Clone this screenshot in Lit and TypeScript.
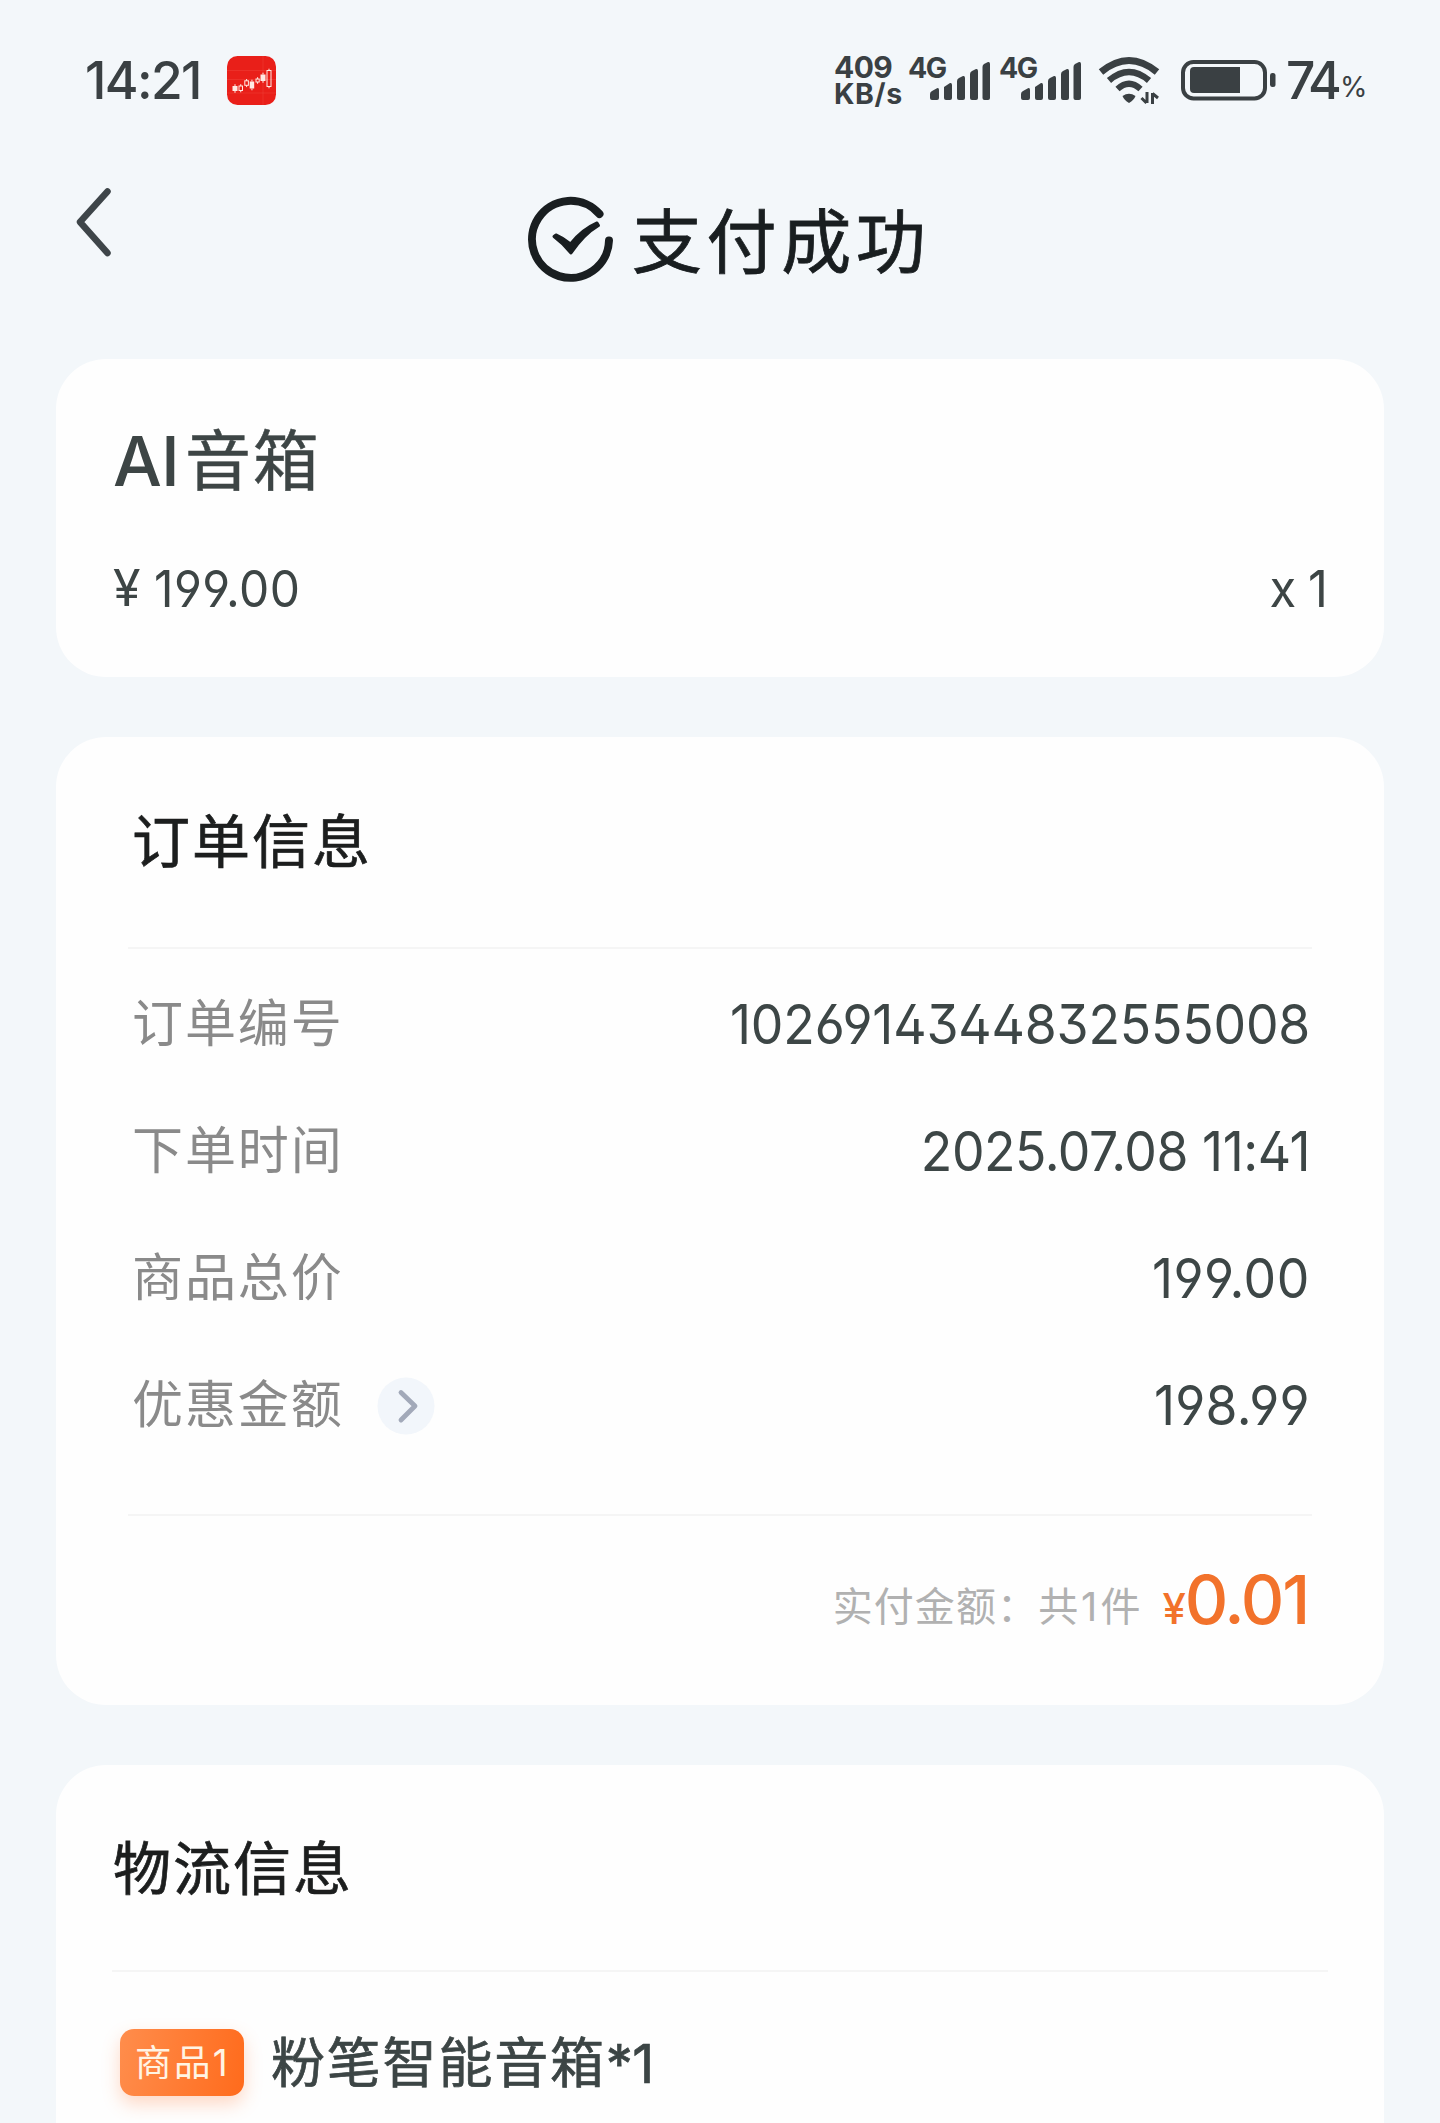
import { LitElement, html, svg, css } from "lit";
import { customElement, property } from "lit/decorators.js";

@customElement("signal-bars")
class SignalBars extends LitElement {
  static styles = css`
    :host { display: flex; width: 83px; height: 60px; position: relative; }
    .net { position: absolute; left: 0; top: -2px; font: 700 28.5px/40px Inter, sans-serif; letter-spacing: -1.4px; color: #3a4043; }
    svg { margin-left: 22px; }
  `;
  render() {
    return html`<span class="net">4G</span>
      <svg width="61" height="60" viewBox="0 0 61 60" fill="#3a4043">
        <path d="M0 44 Q0 42 2 41 L7 38.200 Q9 37.500 9 40 V48 Q9 50 7 50 H2 Q0 50 0 48Z" />
        <path d="M14 37 L20 33 Q22 32.500 22 35 V48 Q22 50 20 50 H16 Q14 50 14 48Z" />
        <path d="M27 31 Q27 29 29 28 L33 26 Q35 25.500 35 28 V48 Q35 50 33 50 H29 Q27 50 27 48Z" />
        <path d="M40 24 Q40 22 42 21 L46 19 Q48 18.500 48 21 V48 Q48 50 46 50 H42 Q40 50 40 48Z" />
        <path d="M52.500 17 Q52.500 15 54 14 L58 12 Q60 11.500 60 14 V48 Q60 50 58 50 H54.500 Q52.500 50 52.500 48Z" />
      </svg>`;
  }
}

@customElement("status-bar")
class StatusBar extends LitElement {
  static styles = css`
    :host { display: flex; height: 60px; padding: 50px 73px 0 85px; color: #3a4043; font-family: Inter, sans-serif; align-items: center; }
    .time { font: 500 51.5px/60px Inter, sans-serif; letter-spacing: -1.6px; width: 142px; white-space: nowrap; }
    .app { display: block; width: 49px; height: 49px; }
    .space { flex: 1; }
    .speed { width: 74px; font: 700 30px/27px Inter, sans-serif; letter-spacing: -0.6px; display: flex; flex-direction: column; }
    .unit { font-size: 28.5px; line-height: 26px; letter-spacing: 0.6px; }
    .bars { display: flex; gap: 8px; }
    .wifi { margin-left: 16px; }
    .battery { margin-left: 19px; }
    .level { margin-left: 10px; font: 500 51.5px/60px Inter, sans-serif; letter-spacing: -4.5px; width: 54px; white-space: nowrap; }
    .pct { font: 400 28px/30px Inter, sans-serif; width: 27px; padding-top: 14px; }
  `;
  render() {
    const candles = [
      [5.5, 30, 5, 5, 1], [12, 30, 3.500, 4.5, 0], [17.800, 24.800, 3.600, 4.500, 0], [22.700, 25.500, 4.500, 7, 1],
      [29, 23, 3.200, 3, 0], [33.500, 18.500, 5, 6.500, 1], [40, 14.500, 4, 16, 0],
    ];
    return html`
      <span class="time">14:21</span>
      <svg class="app" viewBox="0 0 49 49">
        <rect width="49" height="49" rx="10.500" fill="#e91f19" />
        <path d="M0 14.500H49M0 23.500H49M0 37H49M36 0V49" stroke="#f24a42" stroke-width=".6" opacity=".7" />
        ${candles.map(([x, y, w, h, f]) => svg`
          <path d="M${x + w / 2} ${y - 1.8}V${y}M${x + w / 2} ${y + h}V${y + h + 1.8}" stroke="#ffeae4" stroke-width="1" />
          <rect x=${x} y=${y} width=${w} height=${h} fill=${f ? "#ffeae4" : "none"} stroke=${f ? "none" : "#ffeae4"} stroke-width="1" />`)}
      </svg>
      <span class="space"></span>
      <div class="speed"><span>409</span><span class="unit">KB/s</span></div>
      <div class="bars"><signal-bars></signal-bars><signal-bars></signal-bars></div>
      <svg class="wifi" width="64" height="60" viewBox="0 0 64 60" fill="none" stroke="#3a4043">
        <path d="M3 22Q31 -1 59 22" stroke-width="7" stroke-linecap="butt" />
        <path d="M11 30.500Q31 13.500 51 30.500" stroke-width="6.500" />
        <path d="M19.500 39Q31 28.500 42.500 39" stroke-width="6.200" />
        <path d="M24.500 46Q31 41.500 37.500 46Q36 50 31 53Q26 50 24.500 46Z" fill="#3a4043" stroke="none" />
        <path d="M49 42V53M48.500 53L43.500 48M54.500 54V43M54.500 43.500L60 48" stroke-width="3" />
      </svg>
      <svg class="battery" width="95" height="60" viewBox="0 0 95 60">
        <rect x="2" y="12" width="82" height="36.500" rx="10.500" fill="none" stroke="#3a4043" stroke-width="4" />
        <path d="M13 17H59V43H13Q9 43 9 39V21Q9 17 13 17Z" fill="#3a4043" />
        <rect x="89" y="23" width="5.500" height="14" rx="2.500" fill="#3a4043" />
      </svg>
      <span class="level">74</span><span class="pct">%</span>
    `;
  }
}

@customElement("info-row")
class InfoRow extends LitElement {
  @property() label = "";
  @property() value = "";
  @property({ type: Number }) spacing = 0;
  @property({ type: Boolean }) more = false;
  static styles = css`
    :host { display: flex; align-items: center; height: 127px; }
    .label { font: 400 51px/60px Inter, "Noto Sans CJK SC", sans-serif; letter-spacing: 1.9px; color: #8a8a8a; }
    .value { margin-left: auto; font: 400 55px/60px Inter, sans-serif; color: #3d4646; white-space: nowrap; font-feature-settings: "ss01"; transform: scaleX(0.94); transform-origin: right; }
    .more { margin-left: 33px; margin-top: 2px; }
  `;
  render() {
    return html`<span class="label">${this.label}</span>
      ${this.more ? html`<svg class="more" width="58" height="58" viewBox="0 0 58 58">
        <circle cx="29" cy="29" r="28.500" fill="#f2f6fb" />
        <path d="M24 15.500L38 29L24 43" fill="none" stroke="#a2a9b9" stroke-width="4.800" stroke-linecap="round" stroke-linejoin="round" />
      </svg>` : ""}
      <span class="value" style="letter-spacing:${this.spacing}px">${this.value}</span>`;
  }
}

@customElement("app-root")
class AppRoot extends LitElement {
  static styles = css`
    :host { display: block; width: 1440px; height: 2123px; overflow: hidden; background: #f3f7fa; font-family: Inter, "Noto Sans CJK SC", sans-serif; }
    .head { height: 249px; display: flex; align-items: flex-start; box-sizing: border-box; }
    .back { margin: 76px 0 0 72px; }
    .ok { margin: 84px 0 0 412px; }
    .title { margin: 85px 0 0 16px; font: 400 70px/96px Inter, "Noto Sans CJK SC", sans-serif; letter-spacing: 4.6px; color: #191e20; -webkit-text-stroke: 0.8px #191e20; }
    .card { margin: 0 56px 60px 56px; background: #fefefe; border-radius: 50px; box-sizing: border-box; }
    .product { height: 318px; padding: 62px 57px 0 57px; color: #3d4545; }
    .name { display: flex; align-items: center; height: 80px; font-size: 66px; letter-spacing: 1.8px; }
    .latin { font-size: 69px; width: 72px; font-weight: 500; letter-spacing: -1px; white-space: nowrap; }
    .cjk { margin-top: -11px; -webkit-text-stroke: 0.5px #3d4545; }
    .price { display: flex; justify-content: space-between; align-items: center; height: 60px; margin-top: 57px; font-size: 51px; font-feature-settings: "ss01"; }
    .amount { display: flex; }
    .yen { width: 41px; font-size: 50px; transform-origin: left; }
    .num { letter-spacing: 0.5px; transform: scaleX(0.94); transform-origin: left; white-space: nowrap; }
    .qty { letter-spacing: -1px; transform: scaleX(0.96); transform-origin: right; white-space: nowrap; }
    .order { height: 968px; padding: 65px 72px 0 72px; }
    .heading { font: 400 58px/80px Inter, "Noto Sans CJK SC", sans-serif; letter-spacing: 2px; color: #1c1e1e; padding-left: 4px; -webkit-text-stroke: 0.7px #1c1e1e; }
    .line { height: 2px; background: #f5f5f5; }
    .order .line.top { margin-top: 65px; }
    .rows { padding: 11px 2px 0 4px; }
    .order .line.bottom { margin-top: 46px; }
    .total { display: flex; justify-content: flex-end; align-items: baseline; height: 90px; padding: 44px 4px 0 0; line-height: 80px; color: #b1b1b1; font-size: 40px; letter-spacing: 1.1px; white-space: nowrap; }
    .fine { position: relative; top: -3px; }
    .count { letter-spacing: 3px; }
    .cur { margin-left: 19px; color: #f2722b; font-size: 42px; font-weight: 500; letter-spacing: -1px; }
    .sum { color: #f2722b; font-size: 67.5px; font-weight: 500; letter-spacing: -2.2px; }
    .ship { height: 420px; margin-bottom: 0; padding: 64px 56px 0 56px; border-radius: 50px 50px 0 0; }
    .ship .line { margin-top: 61px; }
    .ship .heading { padding-left: 1px; }
    .item { display: flex; align-items: center; height: 67px; margin-top: 57px; padding-left: 8px; }
    .badge { width: 124px; height: 67px; box-sizing: border-box; padding-left: 15px; border-radius: 14px; background: linear-gradient(100deg, #ff8d4c, #ff6b1c); box-shadow: 0 8px 18px rgba(255, 120, 50, 0.28); color: #fff4e4; font-size: 36.5px; line-height: 68px; letter-spacing: 2.4px; white-space: nowrap; }
    .goods { margin: -6px 0 0 27px; font-size: 54px; letter-spacing: 1.8px; color: #3c4545; white-space: nowrap; -webkit-text-stroke: 0.7px #3c4545; }
    .tail { letter-spacing: -0.5px; }
  `;
  render() {
    return html`
      <status-bar></status-bar>
      <div class="head">
        <svg class="back" width="40" height="72" viewBox="0 0 40 72"><path d="M35.500 5.500L8 36L35.500 67" fill="none" stroke="#3e4549" stroke-width="6.500" stroke-linecap="round" stroke-linejoin="round" /></svg>
        <svg class="ok" width="92" height="92" viewBox="0 0 92 92" fill="none" stroke="#191e20" stroke-linecap="round">
          <path d="M75.500 20A38.500 38.500 0 1 0 85 46.500" stroke-width="8" />
          <path d="M30 42.500L32 41Q39 44 46.500 50Q58 35.500 73 29L74.500 31.500Q60 40 47 59Q40 50 30 42.500Z" fill="#191e20" stroke-width="3" stroke-linejoin="round" />
        </svg>
        <div class="title">支付成功</div>
      </div>
      <section class="card product">
        <div class="name"><span class="latin">AI</span><span class="cjk">音箱</span></div>
        <div class="price"><span class="amount"><span class="yen">¥</span><span class="num">199.00</span></span><span class="qty">x 1</span></div>
      </section>
      <section class="card order">
        <div class="heading">订单信息</div>
        <div class="line top"></div>
        <div class="rows">
          <info-row label="订单编号" value="1026914344832555008" .spacing=${-0.2}></info-row>
          <info-row label="下单时间" value="2025.07.08 11:41" .spacing=${-0.5}></info-row>
          <info-row label="商品总价" value="199.00" .spacing=${0.5}></info-row>
          <info-row label="优惠金额" value="198.99" .spacing=${0.3} more></info-row>
        </div>
        <div class="line bottom"></div>
        <div class="total"><span class="fine">实付金额：</span><span class="fine count">共1件</span><span class="cur">¥</span><span class="sum">0.01</span></div>
      </section>
      <section class="card ship">
        <div class="heading">物流信息</div>
        <div class="line"></div>
        <div class="item"><span class="badge">商品1</span><span class="goods">粉笔智能音箱<span class="tail">*1</span></span></div>
      </section>
    `;
  }
}
